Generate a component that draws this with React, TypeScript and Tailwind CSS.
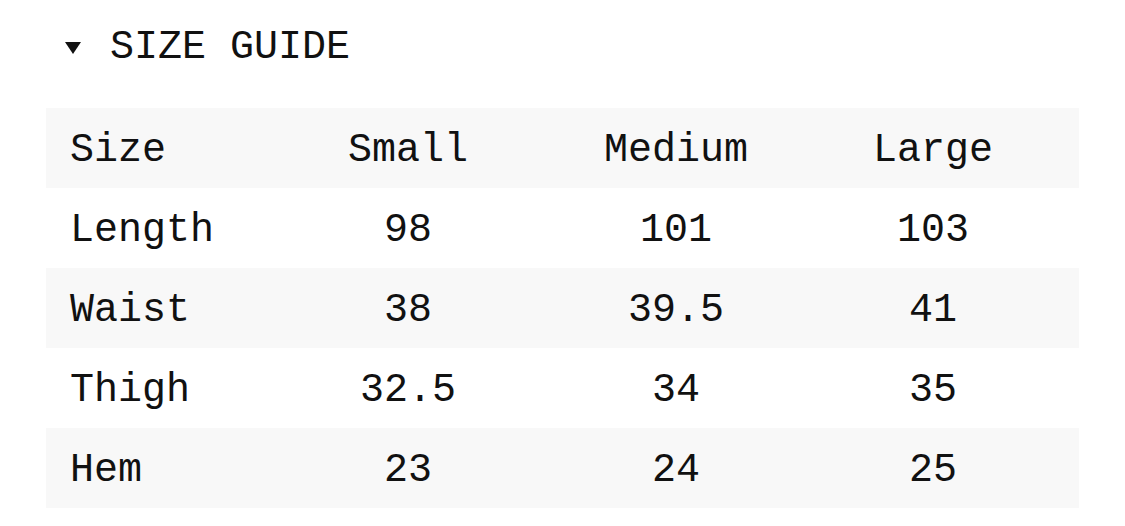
import React from "react";

const rows = [
  ["Size", "Small", "Medium", "Large"],
  ["Length", "98", "101", "103"],
  ["Waist", "38", "39.5", "41"],
  ["Thigh", "32.5", "34", "35"],
  ["Hem", "23", "24", "25"],
];

export default function App() {
  return (
    <div
      className="w-[1125px] h-[526px] bg-white text-[#111] overflow-hidden"
      style={{ fontFamily: '"Liberation Mono", "DejaVu Sans Mono", monospace' }}
    >
      <div className="flex items-center pl-[65px] pt-[26px] h-[44px] box-content">
        <svg width="16" height="12" viewBox="0 0 16 12" className="mr-[29px]">
          <polygon points="0,0 16,0 8,12" fill="#111" />
        </svg>
        <span className="text-[40px] leading-none">SIZE GUIDE</span>
      </div>
      <div className="ml-[46px] mt-[38px] w-[1033px]">
        {rows.map((r, i) => (
          <div
            key={i}
            className={`grid grid-cols-[205px_314px_222px_292px] items-center h-[80px] pt-[6px] ${
              i % 2 === 0 ? "bg-[#f8f8f8]" : "bg-white"
            }`}
          >
            <div className="pl-[24px] text-[40px] leading-none">{r[0]}</div>
            <div className="text-center text-[40px] leading-none">{r[1]}</div>
            <div className="text-center text-[40px] leading-none">{r[2]}</div>
            <div className="text-center text-[40px] leading-none">{r[3]}</div>
          </div>
        ))}
      </div>
    </div>
  );
}
